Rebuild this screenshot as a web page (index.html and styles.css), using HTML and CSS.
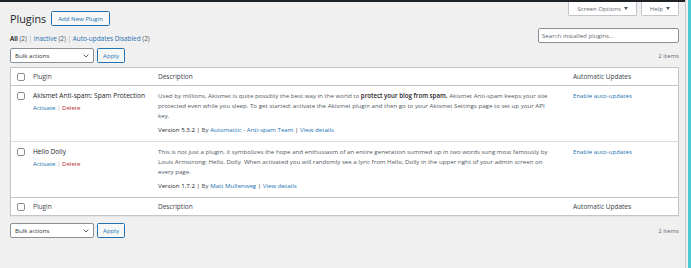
FILE: index.html
```html
<!DOCTYPE html>
<html lang="en">
<head>
    <meta charset="UTF-8">
    <title>Plugins</title>
    <link rel="stylesheet" href="styles.css">
</head>
<body>
    <div class="content">
        <div class="adminbar"></div>
        <div class="wrap">
            <div class="page-head">
                <div class="title-group">
                    <h1>Plugins</h1>
                    <a class="btn-outline add-new" href="#">Add New Plugin</a>
                </div>
                <div class="meta-links">
                    <button class="meta-tab">Screen Options <span class="caret"></span></button>
                    <button class="meta-tab">Help <span class="caret"></span></button>
                </div>
            </div>

            <div class="filter-row">
                <ul class="subsubsub">
                    <li><b class="current">All</b> <span class="num">(2)</span> <span class="sep">|</span>&nbsp;</li>
                    <li><a href="#">Inactive</a> <span class="num">(2)</span> <span class="sep">|</span>&nbsp;</li>
                    <li><a href="#">Auto-updates Disabled</a> <span class="num">(2)</span></li>
                </ul>
                <input class="search" type="search" placeholder="Search installed plugins...">
            </div>

            <div class="tablenav">
                <div class="actions">
                    <div class="select">
                        <span>Bulk actions</span>
                        <svg width="6" height="4" viewBox="0 0 6 4"><path d="M0.6 0.6 L3 3 L5.4 0.6" fill="none" stroke="#50575e" stroke-width="0.9"/></svg>
                    </div>
                    <button class="btn-outline apply">Apply</button>
                </div>
                <span class="count">2 items</span>
            </div>

            <table class="plugins">
                <colgroup>
                    <col class="col-check">
                    <col class="col-name">
                    <col class="col-desc">
                    <col class="col-auto">
                </colgroup>
                <thead>
                    <tr>
                        <th class="check-col"><span class="cb"></span></th>
                        <th>Plugin</th>
                        <th>Description</th>
                        <th>Automatic Updates</th>
                    </tr>
                </thead>
                <tbody>
                    <tr>
                        <td class="check-col"><span class="cb"></span></td>
                        <td class="plugin-title">
                            <strong>Akismet Anti-spam: Spam Protection</strong>
                            <div class="row-actions"><a href="#">Activate</a> | <a class="delete" href="#">Delete</a></div>
                        </td>
                        <td class="plugin-desc">
                            <p>Used by millions, Akismet is quite possibly the best way in the world to <strong>protect your blog from spam.</strong> Akismet Anti-spam keeps your site protected even while you sleep. To get started: activate the Akismet plugin and then go to your Akismet Settings page to set up your API key.</p>
                            <div class="version">Version 5.3.2 | <span class="by">By <a href="#">Automattic - Anti-spam Team</a></span> | <a href="#">View details</a></div>
                        </td>
                        <td class="auto-col"><a href="#">Enable auto-updates</a></td>
                    </tr>
                    <tr>
                        <td class="check-col"><span class="cb"></span></td>
                        <td class="plugin-title">
                            <strong>Hello Dolly</strong>
                            <div class="row-actions"><a href="#">Activate</a> | <a class="delete" href="#">Delete</a></div>
                        </td>
                        <td class="plugin-desc">
                            <p>This is not just a plugin, it symbolizes the hope and enthusiasm of an entire generation summed up in two words sung most famously by Louis Armstrong: Hello, Dolly. When activated you will randomly see a lyric from Hello, Dolly in the upper right of your admin screen on every page.</p>
                            <div class="version">Version 1.7.2 | <span class="by">By <a href="#">Matt Mullenweg</a></span> | <a href="#">View details</a></div>
                        </td>
                        <td class="auto-col"><a href="#">Enable auto-updates</a></td>
                    </tr>
                </tbody>
                <tfoot>
                    <tr>
                        <th class="check-col"><span class="cb"></span></th>
                        <th>Plugin</th>
                        <th>Description</th>
                        <th>Automatic Updates</th>
                    </tr>
                </tfoot>
            </table>

            <div class="tablenav bottom">
                <div class="actions">
                    <div class="select">
                        <span>Bulk actions</span>
                        <svg width="6" height="4" viewBox="0 0 6 4"><path d="M0.6 0.6 L3 3 L5.4 0.6" fill="none" stroke="#50575e" stroke-width="0.9"/></svg>
                    </div>
                    <button class="btn-outline apply">Apply</button>
                </div>
                <span class="count">2 items</span>
            </div>
        </div>
    </div>
    <div class="gutter"></div>
    <div class="edge"></div>
</body>
</html>
```

FILE: styles.css
```css
body {
    margin: 0;
    height: 268px;
    overflow: hidden;
    display: flex;
    background: #f0f0f1;
    font-family: 'Open Sans', 'Noto Sans', sans-serif;
    font-size: 6.1px;
    line-height: 10px;
    color: #50575e;
}

a {
    color: #2271b1;
    text-decoration: none;
}

.content {
    width: 685px;
    flex: none;
    border-right: 1px solid #c8c9cb;
}

.gutter {
    width: 2px;
    flex: none;
}

.edge {
    width: 3px;
    flex: none;
    background: #4cc8d2;
}

.adminbar {
    height: 2px;
    background: #1d2327;
}

.wrap {
    padding: 0 6px 0 10px;
}

.page-head {
    display: flex;
    justify-content: space-between;
    align-items: flex-start;
}

.title-group {
    display: flex;
    align-items: center;
    gap: 5px;
    padding-top: 9px;
}

h1 {
    margin: 0;
    font-size: 10.8px;
    font-weight: 400;
    line-height: 15px;
    color: #1d2327;
}

.btn-outline {
    display: inline-flex;
    align-items: center;
    justify-content: center;
    box-sizing: border-box;
    height: 15px;
    padding: 0 6px;
    border: 1px solid #2271b1;
    border-radius: 1.5px;
    background: #f6f7f7;
    color: #2271b1;
    font-family: inherit;
    font-size: 6.1px;
    font-weight: 500;
}

.btn-outline.apply {
    width: 28px;
    padding: 0;
}

.meta-links {
    display: flex;
    gap: 4px;
}

.meta-tab {
    display: flex;
    align-items: center;
    gap: 3px;
    height: 14px;
    padding: 0 8px;
    border: 1px solid #c3c4c7;
    border-top: 0;
    border-radius: 0 0 2px 2px;
    background: #fff;
    color: #646970;
    font-family: inherit;
    font-size: 6.1px;
}

.caret {
    width: 0;
    height: 0;
    border-left: 2.2px solid transparent;
    border-right: 2.2px solid transparent;
    border-top: 3px solid #50575e;
}

.filter-row {
    display: flex;
    justify-content: space-between;
    align-items: flex-start;
    margin-top: 2px;
}

.subsubsub {
    display: flex;
    margin: 0;
    padding: 6px 0 0;
    list-style: none;
    font-size: 6.4px;
    color: #646970;
}

.subsubsub li {
    white-space: pre;
}

.subsubsub .current {
    color: #000;
    font-weight: 600;
}

.subsubsub .num {
    color: #50575e;
}

.subsubsub .sep {
    color: #a7aaad;
}

.search {
    width: 141px;
    height: 15px;
    box-sizing: border-box;
    margin: 0;
    padding: 0 3px;
    border: 1px solid #8c8f94;
    border-radius: 2px;
    background: #fff;
    font-family: inherit;
    font-size: 6.1px;
    color: #2c3338;
}

.search::placeholder {
    color: #646970;
}

.tablenav {
    display: flex;
    justify-content: space-between;
    align-items: center;
    height: 15px;
    margin-top: 4px;
}

.tablenav.bottom {
    margin-top: 7px;
}

.actions {
    display: flex;
    gap: 3px;
}

.select {
    display: flex;
    align-items: center;
    justify-content: space-between;
    box-sizing: border-box;
    width: 84px;
    height: 15px;
    padding: 0 4px;
    border: 1px solid #8c8f94;
    border-radius: 2px;
    background: #fff;
    color: #2c3338;
}

.count {
    color: #646970;
}

.plugins {
    width: 100%;
    margin-top: 4px;
    border: 1px solid #c3c4c7;
    border-spacing: 0;
    table-layout: fixed;
    background: #fff;
    box-shadow: 0 1px 1px rgba(0, 0, 0, 0.04);
}

.col-check { width: 17px; }
.col-name { width: 125px; }
.col-desc { width: 415px; }
.col-auto { width: 110px; }

.plugins th {
    padding: 4px 5px 3px;
    font-size: 6.5px;
    font-weight: 400;
    text-align: left;
    vertical-align: top;
    color: #3c434a;
}

.plugins thead th {
    border-bottom: 1px solid #c3c4c7;
}

.plugins tfoot th {
    border-top: 1px solid #c3c4c7;
}

.plugins td {
    padding: 5px 5px 6px;
    vertical-align: top;
}

.plugins td.plugin-desc {
    padding-right: 14px;
    font-size: 6.15px;
}

.plugins tbody tr + tr td {
    border-top: 1px solid #dcdcde;
}

.plugins .check-col {
    padding: 4.5px 0 0 6px;
}

.plugins td.check-col {
    padding-top: 6px;
}

.cb {
    display: block;
    width: 8px;
    height: 8px;
    box-sizing: border-box;
    border: 1px solid #8c8f94;
    border-radius: 2px;
    background: #fff;
}

.plugin-title strong {
    display: block;
    margin-bottom: 1.5px;
    font-size: 6.6px;
    font-weight: 500;
    color: #1d2327;
}

.row-actions {
    color: #a7aaad;
}

.row-actions .delete {
    color: #b32d2e;
}

.plugin-desc p {
    margin: 0;
}

.plugin-desc strong {
    font-weight: 600;
    color: #1d2327;
}

.version {
    margin-top: 4px;
    color: #1d2327;
}

.version .by {
    color: #50575e;
}
```
